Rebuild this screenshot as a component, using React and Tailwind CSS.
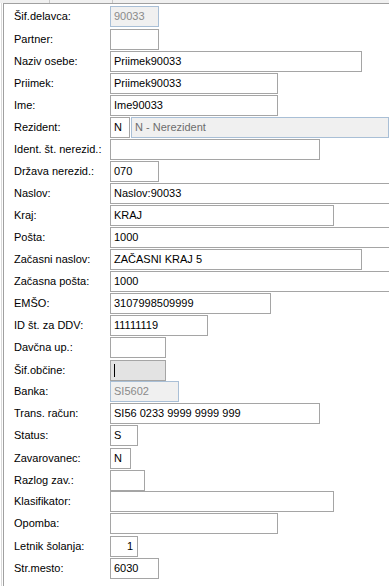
import React from "react";

const rows = [
  { label: "Šif.delavca:", mt: "mt-px", w: "w-[49px]", value: "90033", kind: "locked" },
  { label: "Partner:", mt: "mt-[2px]", w: "w-[49px]", value: "" },
  { label: "Naziv osebe:", mt: "mt-px", w: "w-[252px]", value: "Priimek90033" },
  { label: "Priimek:", mt: "mt-px", w: "w-[168px]", value: "Priimek90033" },
  { label: "Ime:", mt: "mt-px", w: "w-[168px]", value: "Ime90033" },
  { label: "Rezident:", mt: "mt-px", kind: "rezident" },
  { label: "Ident. št. nerezid.:", mt: "mt-px", w: "w-[210px]", value: "" },
  { label: "Država nerezid.:", mt: "mt-px", w: "w-[49px]", value: "070" },
  { label: "Naslov:", mt: "mt-px", w: "w-[300px]", value: "Naslov:90033" },
  { label: "Kraj:", mt: "mt-px", w: "w-[224px]", value: "KRAJ" },
  { label: "Pošta:", mt: "mt-px", w: "w-[300px]", value: "1000" },
  { label: "Začasni naslov:", mt: "mt-px", w: "w-[252px]", value: "ZAČASNI KRAJ 5" },
  { label: "Začasna pošta:", mt: "mt-px", w: "w-[300px]", value: "1000" },
  { label: "EMŠO:", mt: "mt-px", w: "w-[161px]", value: "3107998509999" },
  { label: "ID št. za DDV:", mt: "mt-px", w: "w-[98px]", value: "11111119" },
  { label: "Davčna up.:", mt: "mt-px", w: "w-[56px]", value: "" },
  { label: "Šif.občine:", mt: "mt-[2px]", w: "w-[56px]", value: "", kind: "focused" },
  { label: "Banka:", mt: "mt-0", w: "w-[69px]", value: "SI5602", kind: "locked" },
  { label: "Trans. račun:", mt: "mt-px", w: "w-[210px]", value: "SI56 0233 9999 9999 999" },
  { label: "Status:", mt: "mt-px", w: "w-[28px]", value: "S" },
  { label: "Zavarovanec:", mt: "mt-[2px]", w: "w-[21px]", value: "N" },
  { label: "Razlog zav.:", mt: "mt-px", w: "w-[35px]", value: "" },
  { label: "Klasifikator:", mt: "mt-0", w: "w-[224px]", value: "" },
  { label: "Opomba:", mt: "mt-px", w: "w-[168px]", value: "" },
  { label: "Letnik šolanja:", mt: "mt-[2px]", w: "w-[28px]", value: "1", right: true },
  { label: "Str.mesto:", mt: "mt-px", w: "w-[49px]", value: "6030" },
];

function Field({ row }) {
  if (row.kind === "rezident") {
    return (
      <div className="flex gap-[1px]">
        <div className="h-[21px] w-[20px] border border-[#a5a5a5] bg-white pl-[3px] leading-[19px] text-black">
          N
        </div>
        <div className="h-[21px] w-[258px] border border-[#a9bfd6] bg-[#f0f0f0] pl-[3px] leading-[19px] text-[#6d6d6d]">
          N - Nerezident
        </div>
      </div>
    );
  }
  if (row.kind === "locked") {
    return (
      <div
        className={`h-[21px] ${row.w} shrink-0 border border-[#a9bfd6] bg-[#f0f0f0] pl-[3px] leading-[19px] text-[#8a8a8a]`}
      >
        {row.value}
      </div>
    );
  }
  if (row.kind === "focused") {
    return (
      <div
        className={`flex h-[21px] ${row.w} shrink-0 items-center border border-[#a5a5a5] bg-[#e3e3e3] pl-[3px]`}
      >
        <div className="h-[13px] w-px bg-black" />
      </div>
    );
  }
  return (
    <div
      className={`h-[21px] ${row.w} shrink-0 whitespace-nowrap border border-[#a5a5a5] bg-white leading-[19px] text-black ${
        row.right ? "pr-[4px] text-right" : "pl-[3px]"
      }`}
    >
      {row.value}
    </div>
  );
}

export default function App() {
  return (
    <div className="h-[586px] w-[389px] overflow-hidden bg-white font-['Liberation_Sans',Arial,sans-serif] text-[11px]">
      {/* tab strip edge */}
      <div className="flex h-[3px] bg-[#f0f0f0]">
        <div className="w-[50px] border-r border-[#c8c8c8]" />
        <div className="w-[63px] border-r border-[#c8c8c8]" />
      </div>
      <div className="h-[583px] pl-px">
        <div className="h-full border-l border-[#dadada] pl-px">
          <div className="h-full overflow-hidden border-l border-t border-[#a0a0a0] pt-px pl-[10px]">
            {rows.map((row) => (
              <div key={row.label} className={`flex items-center ${row.mt}`}>
                <div className="w-[96px] shrink-0 whitespace-nowrap text-black">
                  {row.label}
                </div>
                <Field row={row} />
              </div>
            ))}
          </div>
        </div>
      </div>
    </div>
  );
}
